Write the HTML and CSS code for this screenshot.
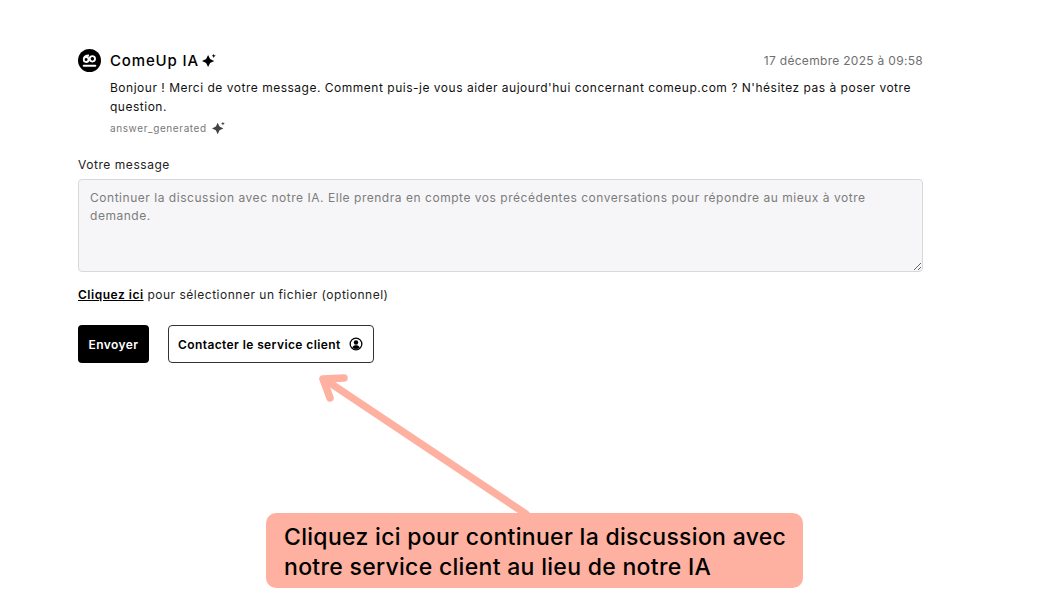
FILE: index.html
```html
<!DOCTYPE html>
<html lang="fr">
<head>
    <meta charset="UTF-8">
    <meta name="viewport" content="width=device-width, initial-scale=1.0">
    <title>ComeUp IA</title>
    <link rel="stylesheet" href="styles.css">
</head>
<body>
    <div class="container">
        <div class="message-head">
            <div class="author">
                <svg class="avatar" viewBox="0 0 24 24">
                    <circle cx="12" cy="12" r="12" fill="#000"/>
                    <path d="M6 17.500h12" stroke="#fff" stroke-width="2.200" stroke-linecap="round"/>
                    <circle cx="15" cy="10.300" r="2.800" fill="none" stroke="#fff" stroke-width="1.900"/>
                    <path d="M11.500 6.800C8 6.800 6 8.500 6 11a2.500 2.500 0 0 0 5 .1 2.500 2.500 0 0 0-5-.1" fill="none" stroke="#fff" stroke-width="1.900"/>
                </svg>
                <span class="author-name">ComeUp IA</span>
                <svg class="sparkle" viewBox="0 0 16 16">
                    <path d="M6.500 2 8.600 6.400 13 8.500l-4.400 2.100L6.500 15l-2.100-4.400L0 8.500l4.400-2.100z"/>
                    <path d="M12.500 .8l.6 1.600 1.600.6-1.600.6-.6 1.600-.6-1.600-1.600-.6 1.600-.6z"/>
                </svg>
            </div>
            <span class="date">17 décembre 2025 à 09:58</span>
        </div>
        <div class="message-body">
            <p class="message-text">Bonjour ! Merci de votre message. Comment puis-je vous aider aujourd'hui concernant comeup.com ? N'hésitez pas à poser votre question.</p>
            <div class="generated">
                <span>answer_generated</span>
                <svg class="sparkle sparkle-grey" viewBox="0 0 16 16">
                    <path d="M6.500 2 8.600 6.400 13 8.500l-4.400 2.100L6.500 15l-2.100-4.400L0 8.500l4.400-2.100z"/>
                    <path d="M12.500 .8l.6 1.600 1.600.6-1.600.6-.6 1.600-.6-1.600-1.600-.6 1.600-.6z"/>
                </svg>
            </div>
        </div>

        <label class="field-label" for="message">Votre message</label>
        <textarea id="message" class="message-input" placeholder="Continuer la discussion avec notre IA. Elle prendra en compte vos précédentes conversations pour répondre au mieux à votre demande."></textarea>

        <p class="file-line"><a href="#" class="file-link">Cliquez ici</a> pour sélectionner un fichier (optionnel)</p>

        <div class="actions">
            <button class="btn btn-send">Envoyer</button>
            <button class="btn btn-contact">
                Contacter le service client
                <svg class="user-icon" viewBox="0 0 24 24">
                    <circle cx="12" cy="12" r="10" fill="none" stroke="#000" stroke-width="2.200"/>
                    <circle cx="12" cy="9.500" r="3.800" fill="#000"/>
                    <path d="M5.500 18c1.500-3 3.800-4 6.500-4s5 1 6.500 4a9 9 0 0 1-13 0z" fill="#000"/>
                </svg>
            </button>
        </div>
    </div>

    <svg class="arrow" viewBox="0 0 1039 608">
        <path d="M526 514 327 381M323 379l21-1M323 379l7 19" fill="none" stroke="#ffb1a1" stroke-width="7.500" stroke-linecap="round"/>
    </svg>
    <div class="callout">Cliquez ici pour continuer la discussion avec notre service client au lieu de notre IA</div>
</body>
</html>
```

FILE: styles.css
```css
body {
    margin: 0;
    height: 608px;
    overflow: hidden;
    background-color: white;
    font-family: Inter, "Open Sans", sans-serif;
    color: #000;
}
.container {
    width: 845px;
    margin-left: 78px;
    padding-top: 49px;
}
.message-head {
    display: flex;
    align-items: center;
    justify-content: space-between;
}
.author {
    display: flex;
    align-items: center;
}
.avatar {
    width: 23px;
    height: 23px;
    margin-right: 9px;
}
.author-name {
    font-size: 15px;
    font-weight: 500;
    letter-spacing: 0.85px;
}
.sparkle {
    width: 15px;
    height: 15px;
    margin-left: 3px;
    fill: #000;
}
.sparkle-grey {
    width: 14px;
    height: 14px;
    margin-left: 5px;
    fill: #444;
}
.date {
    font-size: 12px;
    color: #6f6f6f;
    letter-spacing: 0.3px;
}
.message-body {
    padding-left: 32px;
    margin-top: 6px;
}
.message-text {
    margin: 0;
    font-size: 12px;
    line-height: 19px;
    letter-spacing: 0.51px;
    color: #111;
}
.generated {
    display: flex;
    align-items: center;
    margin-top: 5px;
    font-size: 10px;
    color: #777;
    letter-spacing: 0.6px;
}
.field-label {
    display: block;
    margin-top: 22px;
    font-size: 12px;
    letter-spacing: 0.55px;
    color: #222;
}
.message-input {
    display: block;
    box-sizing: border-box;
    width: 100%;
    height: 93px;
    margin-top: 7px;
    padding: 9px 11px;
    background: #f6f6f8;
    border: 1px solid #d8d8d8;
    border-radius: 4px;
    font-family: inherit;
    font-size: 12px;
    line-height: 18px;
    letter-spacing: 0.53px;
}
.message-input::placeholder {
    color: #7c7c7c;
    opacity: 1;
}
.file-line {
    margin: 15px 0 0;
    font-size: 12px;
    line-height: 16px;
    letter-spacing: 0.51px;
    color: #222;
}
.file-link {
    color: #000;
    font-weight: 600;
}
.actions {
    display: flex;
    gap: 19px;
    margin-top: 22px;
}
.btn {
    display: flex;
    align-items: center;
    height: 38px;
    box-sizing: border-box;
    border-radius: 4px;
    font-family: inherit;
    font-size: 12px;
    font-weight: 600;
    letter-spacing: 0.4px;
    cursor: pointer;
}
.btn-send {
    width: 71px;
    justify-content: center;
    padding: 0;
    background-color: #000;
    color: white;
    border: none;
}
.btn-contact {
    padding: 0 10px 0 9px;
    gap: 8px;
    background: white;
    color: #000;
    border: 1px solid #333;
}
.user-icon {
    width: 14px;
    height: 14px;
}
.arrow {
    position: absolute;
    left: 0;
    top: 0;
    width: 1039px;
    height: 608px;
    pointer-events: none;
}
.callout {
    position: absolute;
    left: 266px;
    top: 513px;
    width: 537px;
    height: 75px;
    box-sizing: border-box;
    padding: 9px 10px 9px 18px;
    background-color: #ffb1a1;
    border-radius: 10px;
    font-size: 23px;
    font-weight: 500;
    letter-spacing: 0.3px;
    line-height: 30px;
    color: #000;
}
```
